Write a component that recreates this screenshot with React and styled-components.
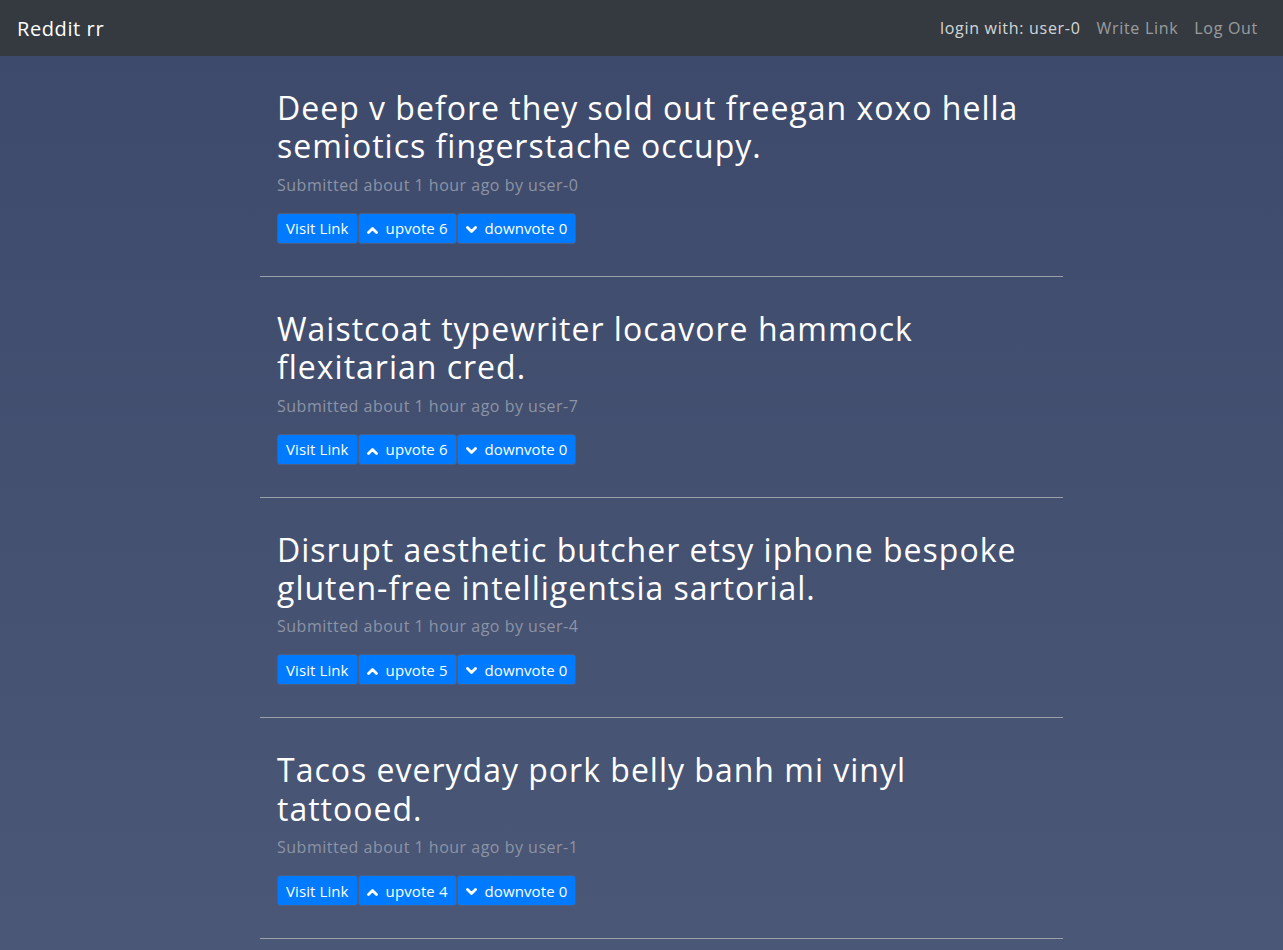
import React from "react";
import styled, { createGlobalStyle } from "styled-components";

const Global = createGlobalStyle`
  html, body { margin: 0; padding: 0; }
  body {
    font-family: "Open Sans", "Noto Sans", sans-serif;
    background: #4a5776;
    color: #fff;
  }
`;

const Page = styled.div`
  min-height: 950px;
  background: linear-gradient(to bottom, #343a40 0, #343a40 56px, #3e4a6b 56px, #4a5776 100%);
`;

const NavBar = styled.nav`
  height: 56px;
  background: #343a40;
  display: flex;
  align-items: center;
  justify-content: space-between;
  padding: 0 25px 0 17px;
`;

const Brand = styled.div`
  font-size: 20px;
  color: #fff;
  letter-spacing: 0.6px;
`;

const NavLinks = styled.div`
  display: flex;
  align-items: center;
  gap: 16px;
  font-size: 16px;
  letter-spacing: 0.7px;
`;

const NavItem = styled.span`
  color: ${(p) => (p.$active ? "rgba(255,255,255,0.8)" : "rgba(255,255,255,0.5)")};
`;

const List = styled.main`
  margin-left: 260px;
  width: 803px;
  padding-top: 33px;
`;

const Card = styled.article`
  padding: 0 17px 32px;
  margin-bottom: 33px;
  border-bottom: 1px solid #9aa0ab;
`;

const Title = styled.h2`
  margin: 0;
  font-size: 32px;
  font-weight: 400;
  line-height: 38.4px;
  color: #fff;
  letter-spacing: 1px;
`;

const Meta = styled.div`
  margin-top: 7px;
  font-size: 16px;
  line-height: 24px;
  color: #8c94a6;
  letter-spacing: 0.5px;
`;

const Actions = styled.div`
  margin-top: 16px;
  display: flex;
  gap: 0;
`;

const Button = styled.button`
  height: 31px;
  padding: 0 8px;
  display: inline-flex;
  align-items: center;
  gap: 8px;
  background: #007bff;
  color: #fff;
  border: 1px solid #4e5d82;
  border-radius: 3px;
  font-family: inherit;
  font-size: 15px;
  letter-spacing: 0.1px;
  cursor: pointer;
`;

const Chevron = styled.svg`
  width: 11px;
  height: 8px;
  margin-top: 3px;
  flex: none;
`;

const Up = () => (
  <Chevron viewBox="0 0 11 8">
    <polyline points="1.5,6.5 5.5,2.5 9.5,6.5" fill="none" stroke="#fff" strokeWidth="2.8" strokeLinecap="round" strokeLinejoin="round" />
  </Chevron>
);

const Down = () => (
  <Chevron viewBox="0 0 11 8">
    <polyline points="1.5,1.5 5.5,5.5 9.5,1.5" fill="none" stroke="#fff" strokeWidth="2.8" strokeLinecap="round" strokeLinejoin="round" />
  </Chevron>
);

const posts = [
  { title: "Deep v before they sold out freegan xoxo hella semiotics fingerstache occupy.", user: "user-0", up: 6, down: 0 },
  { title: "Waistcoat typewriter locavore hammock flexitarian cred.", user: "user-7", up: 6, down: 0 },
  { title: "Disrupt aesthetic butcher etsy iphone bespoke gluten-free intelligentsia sartorial.", user: "user-4", up: 5, down: 0 },
  { title: "Tacos everyday pork belly banh mi vinyl tattooed.", user: "user-1", up: 4, down: 0 },
];

export default function App() {
  return (
    <Page>
      <Global />
      <NavBar>
        <Brand>Reddit rr</Brand>
        <NavLinks>
          <NavItem $active>login with: user-0</NavItem>
          <NavItem>Write Link</NavItem>
          <NavItem>Log Out</NavItem>
        </NavLinks>
      </NavBar>
      <List>
        {posts.map((p, i) => (
          <Card key={i}>
            <Title>{p.title}</Title>
            <Meta>Submitted about 1 hour ago by {p.user}</Meta>
            <Actions>
              <Button>Visit Link</Button>
              <Button><Up />upvote {p.up}</Button>
              <Button><Down />downvote {p.down}</Button>
            </Actions>
          </Card>
        ))}
      </List>
    </Page>
  );
}
